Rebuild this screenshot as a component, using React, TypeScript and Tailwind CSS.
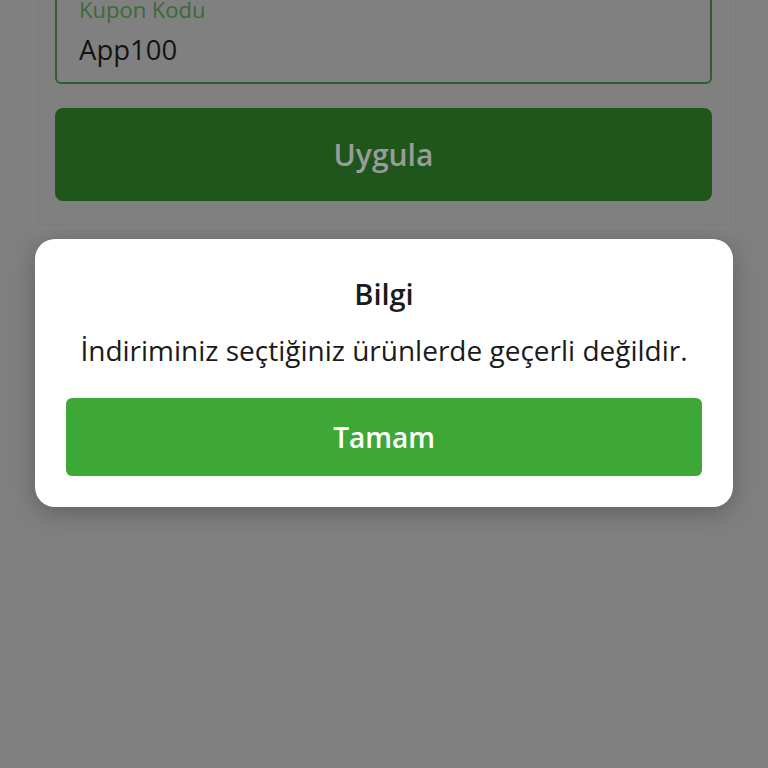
export default function App() {
  return (
    <div className="relative h-[768px] w-[768px] overflow-hidden bg-[#808080] font-['Open_Sans',sans-serif]">
      <div className="mx-[33px] -mt-[40px] w-[701px] rounded-b-[4px] border border-t-0 border-[#868686] px-[21px] pb-[27px] pt-[10px]">
        <div className="flex h-[114px] flex-col justify-end rounded-[6px] border-2 border-[#2e5f2e] px-[22px] pb-[14px]">
          <p className="text-[22px] leading-[24px] text-[#3a6a3a]">Kupon Kodu</p>
          <p className="mt-[11px] text-[27.5px] leading-[36px] text-[#141414]">App100</p>
        </div>
        <button className="mt-[24px] flex h-[93px] w-full items-center justify-center rounded-[8px] bg-[#1e561c] text-[30px] font-semibold text-[#999c99]">
          Uygula
        </button>
      </div>

      <div className="mx-[35px] mt-[10px] w-[698px] rounded-[20px] bg-white px-[31px] pb-[31px] pt-[37px] shadow-[0_6px_24px_rgba(0,0,0,0.25)]">
        <h2 className="text-center text-[29px] font-semibold leading-[36px] text-[#1a1a1a]">Bilgi</h2>
        <p className="mt-[20px] text-center text-[28px] leading-[36px] text-[#1a1a1a]">
          İndiriminiz seçtiğiniz ürünlerde geçerli değildir.
        </p>
        <button className="mt-[30px] flex h-[78px] w-full items-center justify-center rounded-[6px] bg-[#3ea836] text-[28px] font-semibold text-white">
          Tamam
        </button>
      </div>
    </div>
  );
}
